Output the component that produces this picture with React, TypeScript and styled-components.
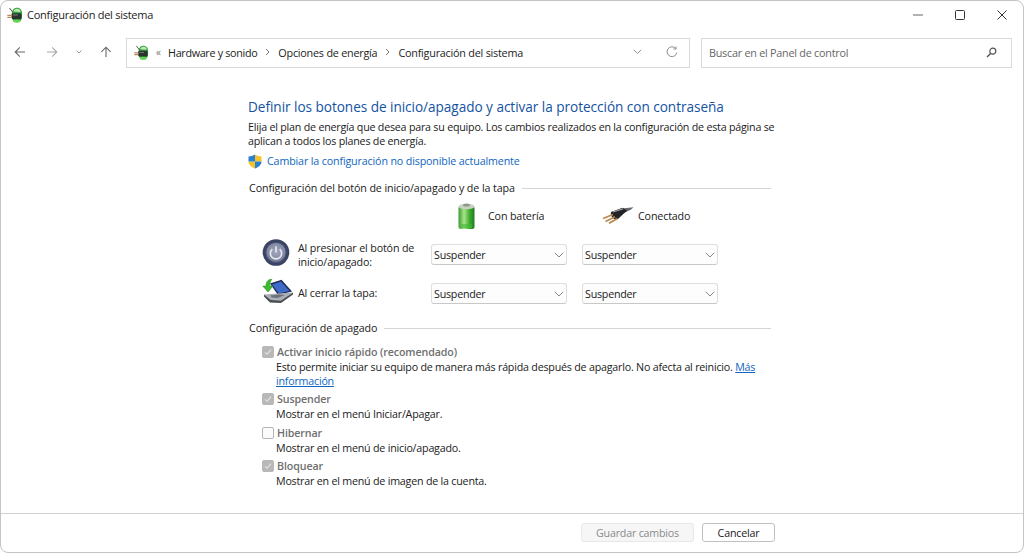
import React from "react";
import styled, { createGlobalStyle } from "styled-components";

const Global = createGlobalStyle`
  html, body { margin: 0; padding: 0; background: #fff; }
  body { font-family: "Open Sans", "Noto Sans", "Liberation Sans", sans-serif; font-size: 11px; color: #1a1a1a; }
  * { box-sizing: border-box; }
`;

const Win = styled.div`
  width: 1024px; height: 553px; display: flex; flex-direction: column; background: #fff;
  border: 1px solid #c4c4c4; border-radius: 8px; overflow: hidden;
`;
const TitleBar = styled.div`
  height: 27px; flex: none; display: flex; align-items: center; padding-left: 6px;
`;
const TitleText = styled.span`
  font-size: 11px; margin-left: 4px; color: #222; letter-spacing: -0.26px;
`;
const WinButtons = styled.div`
  margin-left: auto; display: flex; height: 27px; align-items: center;
`;
const WinBtn = styled.div`
  width: 42px; height: 27px; display: flex; align-items: center; justify-content: center; color: #333;
`;
const NavRow = styled.div`
  height: 30px; flex: none; margin-top: 10px; display: flex; align-items: center; padding-left: 13px; padding-right: 11px;
`;
const NavBtn = styled.div<{ $w: number }>`
  width: ${(p) => p.$w}px; height: 100%; display: flex; align-items: center; padding-bottom: 2px;
`;
const AddressBar = styled.div`
  width: 564px; height: 30px; margin-left: 13px; border: 1px solid #d9d9d9; display: flex; align-items: center; padding: 0 0 2px 7px; color: #444;
`;
const Crumb = styled.span<{ $ls?: number }>`
  font-size: 10.8px; color: #222; letter-spacing: ${(p) => p.$ls ?? -0.22}px;
`;
const CrumbSep = styled.span`
  width: 21px; display: flex; justify-content: center; color: #666;
`;
const Chevrons = styled.span`
  width: 19px; display: flex; justify-content: center; color: #777; font-size: 10px;
`;
const AddrTools = styled.div`
  margin-left: auto; display: flex; align-items: center; gap: 24px; padding-right: 11px; color: #888;
`;
const SearchBox = styled.div`
  width: 311px; height: 30px; margin-left: auto; border: 1px solid #d9d9d9; display: flex; align-items: center; padding: 0 14px 2px 7px;
  font-size: 10.8px; color: #666; letter-spacing: -0.24px; justify-content: space-between;
`;
const Main = styled.main`
  flex: 1; padding: 29px 0 0 247px; min-height: 0;
`;
const Heading = styled.h1`
  margin: 0; font-weight: 400; font-size: 13.6px; line-height: 20px; color: #14539f; letter-spacing: -0.04px;
`;
const Para = styled.p`
  margin: 3px 0 0; width: 535px; font-size: 10.7px; line-height: 14px; color: #1a1a1a; letter-spacing: -0.215px;
`;
const ShieldRow = styled.div`
  display: flex; align-items: center; gap: 5px; margin-top: 5px; height: 16px; font-size: 10.7px; color: #0f66c0; letter-spacing: -0.14px;
`;
const Section = styled.div<{ $top: number }>`
  width: 523px; margin-top: ${(p) => p.$top}px; height: 16px; display: flex; align-items: center; gap: 7px;
  padding-left: 1px; font-size: 10.7px; color: #1a1a1a; letter-spacing: -0.1px;
  &::after { content: ""; flex: 1; height: 1px; background: #d4d4d4; }
`;
const PowerGrid = styled.div`
  display: grid; grid-template-columns: 168px 136px 136px; grid-template-rows: 31px 31px 31px; gap: 8px 15px; margin-top: 4px;
`;
const ColHead = styled.div`
  display: flex; align-items: center; font-size: 10.7px; letter-spacing: -0.14px;
`;
const BatHead = styled(ColHead)`
  padding-left: 26px; gap: 11px;
`;
const PlugHead = styled(ColHead)`
  padding-left: 20px; gap: 4px;
`;
const RowLabel = styled.div`
  display: flex; align-items: center; padding-left: 14px; gap: 8px; white-space: nowrap;
  font-size: 10.7px; line-height: 14px; letter-spacing: -0.14px; color: #222;
`;
const IconSlot = styled.span<{ $lift: number }>`
  display: flex; flex: none; width: 28px; margin-bottom: ${(p) => p.$lift}px;
`;
const LabelText = styled.span<{ $lift?: number }>`
  margin-bottom: ${(p) => p.$lift ?? 0}px;
`;
const SelectBox = styled.div`
  align-self: center; height: 21px; border: 1px solid #dedede; border-bottom-color: #c8c8c8; border-radius: 3px; background: #fdfdfd;
  display: flex; align-items: center; justify-content: space-between; padding: 0 2px 0 2px; font-size: 10.7px; letter-spacing: -0.23px; color: #1a1a1a;
`;
const CheckList = styled.div`
  display: flex; flex-direction: column; padding-left: 14px; margin-top: 8px;
`;
const CheckRow = styled.div<{ $mt?: number }>`
  display: flex; align-items: center; gap: 3px; height: 15px; margin-top: ${(p) => p.$mt ?? 0}px;
  font-weight: 600; font-size: 10.7px; letter-spacing: -0.12px; color: #6f6f6f;
`;
const Box = styled.span<{ $on?: boolean }>`
  width: 12px; height: 12px; border-radius: 2px; display: flex; align-items: center; justify-content: center; flex: none;
  background: ${(p) => (p.$on ? "#b8b8b8" : "#fbfbfb")}; border: 1px solid ${(p) => (p.$on ? "#b8b8b8" : "#b5b5b5")};
`;
const Desc = styled.div`
  margin-left: 14px; width: 490px; margin-top: 1px; font-size: 10.7px; line-height: 14px; color: #222; letter-spacing: -0.21px;
`;
const More = styled.a`
  color: #0f66c0; text-decoration: underline;
`;
const Footer = styled.footer`
  height: 39px; flex: none; border-top: 1px solid #d2d2d2; display: flex; justify-content: flex-end; align-items: flex-start; gap: 8px;
  padding: 9px 248px 0 0;
`;
const Btn = styled.div<{ $off?: boolean; $w: number }>`
  width: ${(p) => p.$w}px; height: 19px; border-radius: 3px; display: flex; align-items: center; justify-content: center; font-size: 10.7px; letter-spacing: -0.2px;
  background: ${(p) => (p.$off ? "#f6f6f6" : "#fff")}; color: ${(p) => (p.$off ? "#8a8a8a" : "#1a1a1a")};
  border: 1px solid ${(p) => (p.$off ? "#e8e8e8" : "#c0c0c0")};
`;

const PowerGlobe = ({ size }: { size: number }) => (
  <svg width={size} height={size} viewBox="0 0 16 16" style={{ flex: "none" }}>
    <path d="M5 6C5 2.500 7.500.8 10 .8s5 1.700 5 5.200v4c0 3-2.200 5.200-5 5.200S5 13 5 10Z" fill="#35a83c" />
    <path d="M6.500 4.500C7 2.500 8.800 1.600 10.500 1.800 12.500 2 13.600 3.500 13.500 5Z" fill="#bfe8b4" />
    <ellipse cx="9.800" cy="14" rx="3.600" ry="1.700" fill="#62d44f" />
    <rect x="4.500" y="6.200" width="10" height="6" rx="1.400" fill="#2b3230" />
    <rect x="5.800" y="7.400" width="5" height="1.200" fill="#6b7571" />
    <path d="M.3 8.300h4.400M.3 10.300h4.400" stroke="#b98c55" strokeWidth="1.300" />
    <path d="M2.500 1 6 5.500" stroke="#55564a" strokeWidth="1" />
  </svg>
);
const Chev = ({ w = 9, c = "#777" }: { w?: number; c?: string }) => (
  <svg width={w} height={w * 0.6} viewBox="0 0 10 6"><path d="M.8.800 5 5l4.200-4.200" fill="none" stroke={c} strokeWidth="1" /></svg>
);
const SepChev = () => (
  <svg width="5" height="8" viewBox="0 0 5 8"><path d="M1 1l3 3-3 3" fill="none" stroke="#777" /></svg>
);
const Arrow = ({ flip, up, c }: { flip?: boolean; up?: boolean; c: string }) => (
  <svg width="12" height="12" viewBox="0 0 12 12" style={{ transform: up ? "rotate(90deg)" : flip ? "rotate(180deg)" : undefined }}>
    <path d="M11 6H1.200M5.800 1.400 1.200 6l4.600 4.600" fill="none" stroke={c} strokeWidth="1.100" />
  </svg>
);
const Shield = () => (
  <svg width="14" height="15" viewBox="0 0 14 15" style={{ flex: "none" }}>
    <path d="M7 7.500H.5c0 3.100 2.800 5.700 6.500 7.100Z" fill="#f7c325" />
    <path d="M7 .5C9 1.800 11 2.300 13.500 2.400v5.100H7Z" fill="#f7c325" />
    <path d="M7 .5C5 1.800 3 2.300.5 2.400v5.100H7Z" fill="#2b7fd4" />
    <path d="M7 7.500v7.100c3.700-1.400 6.500-4 6.500-7.100Z" fill="#2b7fd4" />
  </svg>
);
const Battery = () => (
  <svg width="20" height="28" viewBox="0 0 20 28" style={{ flex: "none" }}>
    <defs>
      <linearGradient id="bat" x1="0" x2="1"><stop offset="0" stopColor="#3d9a32" /><stop offset=".35" stopColor="#a8e58a" /><stop offset=".7" stopColor="#3ca92f" /><stop offset="1" stopColor="#1f7c20" /></linearGradient>
    </defs>
    <rect x="1.500" y="4" width="16" height="23" rx="2" fill="url(#bat)" />
    <ellipse cx="9.500" cy="4.500" rx="8" ry="2.800" fill="#c8d2c4" />
    <ellipse cx="9.500" cy="3" rx="3.500" ry="1.500" fill="#8f9a8c" />
    <rect x="4" y="22" width="11" height="4" fill="#45b83a" opacity=".6" />
  </svg>
);
const Plug = () => (
  <svg width="32" height="17" viewBox="0 0 32 17" style={{ flex: "none" }}>
    <path d="M20 1.500 31.500.3 29 2.500 22 6Z" fill="#6a6a6e" />
    <path d="M9 5 20.500.8 25 3.500 16 12C12 13.500 8 9.500 9 5Z" fill="#232327" />
    <path d="M11 5 21 1.800" stroke="#9a9aa2" strokeWidth="1.300" />
    <path d="M11 7.500 1 11.500M13 9.700 3.500 14.500M15.500 11.500 7 16.300" stroke="#b98a50" strokeWidth="1.800" />
  </svg>
);
const PowerBtn = () => (
  <svg width="28" height="27" viewBox="0 0 28 28" style={{ flex: "none" }}>
    <defs>
      <radialGradient id="pb" cx=".5" cy=".45" r=".6"><stop offset="0" stopColor="#a2a9bf" /><stop offset=".7" stopColor="#828aa3" /><stop offset="1" stopColor="#565e7a" /></radialGradient>
    </defs>
    <circle cx="14" cy="14" r="13.800" fill="#3a4364" />
    <circle cx="14" cy="14" r="10.500" fill="url(#pb)" stroke="#4a5272" />
    <path d="M10.200 10.500a5.800 5.800 0 1 0 7.600 0" fill="none" stroke="#e6e9ef" strokeWidth="1.700" />
    <path d="M14 7.500v6.500" stroke="#e6e9ef" strokeWidth="1.700" />
  </svg>
);
const Laptop = () => (
  <svg width="32" height="24" viewBox="0 0 32 24" style={{ flex: "none", marginRight: -4 }}>
    <path d="M8 4.500 19.500.8 30 12.500 16 16Z" fill="#1c2a55" />
    <path d="M10 5.500 19 2.500 27.500 12 16.800 14.500Z" fill="#3f6bc8" />
    <path d="M2 15.500 16 14.500 31 13.500 19 21.500 9 21Z" fill="#a9afb7" />
    <path d="M2 15.500 9 21 19 21.500 31 13.500V15.500L19 24 8 23.500 2 17.500Z" fill="#4a4d54" />
    <path d="M8 16.500 17 15.500 23 16 15.500 19 10 18.500Z" fill="#6c717a" />
    <path d="M10 0C5.500.5 4 3 4 7H.8L6 13 11 7H7.700C7.800 4.500 8.500 2 10 0Z" fill="#3dba2e" stroke="#21851c" strokeWidth=".5" />
  </svg>
);
const Tick = () => (
  <svg width="8" height="8" viewBox="0 0 8 8"><path d="M1 4.300 3.100 6.300 7 1.700" fill="none" stroke="#e6e6e6" strokeWidth="1.100" /></svg>
);
const Select = () => (
  <SelectBox>Suspender<Chev w={10} c="#888" /></SelectBox>
);

export default function App() {
  return (
    <>
      <Global />
      <Win>
        <TitleBar>
          <PowerGlobe size={16} />
          <TitleText>Configuración del sistema</TitleText>
          <WinButtons>
            <WinBtn><svg width="10" height="10" viewBox="0 0 10 10"><path d="M0 5h10" stroke="#666" /></svg></WinBtn>
            <WinBtn><svg width="10" height="10" viewBox="0 0 10 10"><rect x=".5" y=".5" width="9" height="9" rx="1" fill="none" stroke="#333" /></svg></WinBtn>
            <WinBtn><svg width="10" height="10" viewBox="0 0 10 10"><path d="M.5.500l9 9M9.500.500l-9 9" stroke="#333" /></svg></WinBtn>
          </WinButtons>
        </TitleBar>
        <NavRow>
          <NavBtn $w={32}><Arrow c="#6a6a6a" /></NavBtn>
          <NavBtn $w={30}><Arrow flip c="#a8a8a8" /></NavBtn>
          <NavBtn $w={24}><Chev w={6} c="#555" /></NavBtn>
          <NavBtn $w={13}><Arrow up c="#666" /></NavBtn>
          <AddressBar>
            <PowerGlobe size={15} />
            <Chevrons>«</Chevrons>
            <Crumb $ls={-0.33}>Hardware y sonido</Crumb>
            <CrumbSep><SepChev /></CrumbSep>
            <Crumb>Opciones de energía</Crumb>
            <CrumbSep><SepChev /></CrumbSep>
            <Crumb>Configuración del sistema</Crumb>
            <AddrTools>
              <Chev w={9} c="#888" />
              <svg width="12" height="12" viewBox="0 0 12 12"><path d="M10.800 6.500A4.900 4.900 0 1 1 9.500 2.300M10 .5v2.500H7.500" fill="none" stroke="#8a8a8a" /></svg>
            </AddrTools>
          </AddressBar>
          <SearchBox>
            Buscar en el Panel de control
            <svg width="11" height="11" viewBox="0 0 11 11"><circle cx="6.800" cy="4.200" r="3" fill="none" stroke="#555" strokeWidth="1.200" /><path d="M4.600 6.400 1 10" stroke="#555" strokeWidth="1.400" /></svg>
          </SearchBox>
        </NavRow>
        <Main>
          <Heading>Definir los botones de inicio/apagado y activar la protección con contraseña</Heading>
          <Para>Elija el plan de energía que desea para su equipo. Los cambios realizados en la configuración de esta página se aplican a todos los planes de energía.</Para>
          <ShieldRow><Shield />Cambiar la configuración no disponible actualmente</ShieldRow>
          <Section $top={11}>Configuración del botón de inicio/apagado y de la tapa</Section>
          <PowerGrid>
            <div />
            <BatHead><Battery />Con batería</BatHead>
            <PlugHead><Plug />Conectado</PlugHead>
            <RowLabel><IconSlot $lift={4}><PowerBtn /></IconSlot><LabelText>Al presionar el botón de<br />inicio/apagado:</LabelText></RowLabel>
            <Select />
            <Select />
            <RowLabel><IconSlot $lift={5}><Laptop /></IconSlot><LabelText $lift={1}>Al cerrar la tapa:</LabelText></RowLabel>
            <Select />
            <Select />
          </PowerGrid>
          <Section $top={11}>Configuración de apagado</Section>
          <CheckList>
            <CheckRow><Box $on><Tick /></Box>Activar inicio rápido (recomendado)</CheckRow>
            <Desc>Esto permite iniciar su equipo de manera más rápida después de apagarlo. No afecta al reinicio. <More>Más</More> <More>información</More></Desc>
            <CheckRow $mt={3}><Box $on><Tick /></Box>Suspender</CheckRow>
            <Desc>Mostrar en el menú Iniciar/Apagar.</Desc>
            <CheckRow $mt={4}><Box />Hibernar</CheckRow>
            <Desc>Mostrar en el menú de inicio/apagado.</Desc>
            <CheckRow $mt={3}><Box $on><Tick /></Box>Bloquear</CheckRow>
            <Desc>Mostrar en el menú de imagen de la cuenta.</Desc>
          </CheckList>
        </Main>
        <Footer>
          <Btn $off $w={113}>Guardar cambios</Btn>
          <Btn $w={73}>Cancelar</Btn>
        </Footer>
      </Win>
    </>
  );
}
